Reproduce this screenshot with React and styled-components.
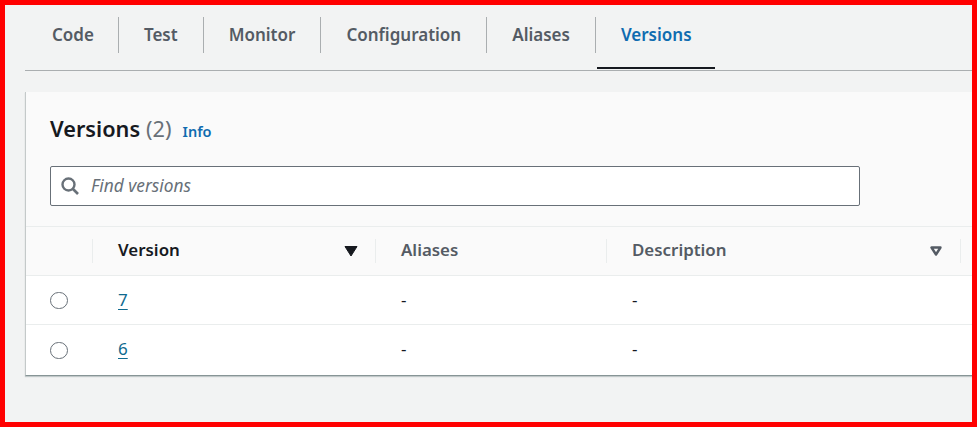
import React from "react";
import styled, { createGlobalStyle } from "styled-components";

const GlobalStyle = createGlobalStyle`
  html, body {
    margin: 0;
    padding: 0;
    background: #f2f3f3;
  }
  * {
    box-sizing: border-box;
  }
`;

const tabs = ["Code", "Test", "Monitor", "Configuration", "Aliases", "Versions"];
const versions = ["7", "6"];

function SortIcon({ active }) {
  return (
    <SortSvg viewBox="0 0 14 12">
      {active ? (
        <path d="M1 1.5h12L7 11z" fill="#16191f" stroke="#16191f" strokeLinejoin="round" />
      ) : (
        <path d="M2.5 2.5h9L7 9.5z" fill="none" stroke="#545b64" strokeWidth="2.4" strokeLinejoin="round" />
      )}
    </SortSvg>
  );
}

function SearchIcon() {
  return (
    <SearchSvg viewBox="0 0 18 18">
      <circle cx="7.5" cy="7.5" r="6" fill="none" stroke="#687078" strokeWidth="2.4" />
      <path d="M12 12l5 5" fill="none" stroke="#687078" strokeWidth="2.6" />
    </SearchSvg>
  );
}

export default function App() {
  return (
    <Page>
      <GlobalStyle />
      <TabBar>
        {tabs.map((tab, index) => (
          <Tab key={tab} $active={tab === "Versions"} $first={index === 0}>
            {tab}
          </Tab>
        ))}
      </TabBar>
      <Panel>
        <PanelHead>
          <TitleRow>
            <Title>Versions</Title>
            <Count>(2)</Count>
            <Info>Info</Info>
          </TitleRow>
          <SearchBox>
            <SearchIcon />
            <SearchInput placeholder="Find versions" readOnly />
          </SearchBox>
        </PanelHead>
        <HeadRow>
          <HeadCell />
          <HeadCell $sep $active>
            Version
            <SortIcon active />
          </HeadCell>
          <HeadCell $sep>Aliases</HeadCell>
          <HeadCell $sep>
            Description
            <SortIcon />
          </HeadCell>
          <HeadCell $sep />
        </HeadRow>
        {versions.map((version) => (
          <Row key={version}>
            <RadioCell>
              <Radio />
            </RadioCell>
            <Cell>
              <VersionLink href="#">{version}</VersionLink>
            </Cell>
            <Cell>-</Cell>
            <Cell>-</Cell>
            <Cell />
          </Row>
        ))}
      </Panel>
    </Page>
  );
}

const columns = "66px 283px 231px 354px 1fr";

const Page = styled.div`
  width: 977px;
  height: 427px;
  border: 5px solid #ff0000;
  background: #f2f3f3;
  padding: 0 0 0 20px;
  font-family: "Noto Sans", "Open Sans", sans-serif;
  overflow: hidden;
`;

const TabBar = styled.div`
  display: flex;
  align-items: center;
  height: 66px;
  padding-bottom: 5px;
  border-bottom: 1px solid #aaaeb0;
  margin-bottom: 21px;
`;

const Tab = styled.div`
  position: relative;
  height: 36px;
  display: flex;
  align-items: center;
  padding: 0 ${(p) => (p.$first ? "24px" : p.$active ? "23px" : "25px")} 2px ${(p) => (p.$first ? "27px" : "25px")};
  font-size: 17px;
  font-weight: 600;
  color: ${(p) => (p.$active ? "#0f6cb0" : "#545b64")};
  border-right: ${(p) => (p.$active ? "none" : "1px solid #aaaeb0")};
  ${(p) =>
    p.$active &&
    `
    &::after {
      content: "";
      position: absolute;
      left: 1px;
      right: 0;
      bottom: -16px;
      height: 2px;
      background: #16191f;
    }
  `}
`;

const Panel = styled.div`
  background: #fff;
  border-left: 1px solid #c4c9c9;
  border-bottom: 1px solid #879596;
  box-shadow: 0 1px 1px rgba(0, 28, 36, 0.2);
`;

const PanelHead = styled.div`
  background: #fafafa;
  padding: 22px 0 20px 24px;
  height: 135px;
  border-bottom: 1px solid #eaeded;
`;

const TitleRow = styled.div`
  display: flex;
  align-items: baseline;
  height: 32px;
  margin-bottom: 20px;
`;

const Title = styled.h2`
  margin: 0;
  font-size: 21.7px;
  font-weight: 600;
  color: #16191f;
`;

const Count = styled.span`
  margin-left: 6px;
  font-size: 21.7px;
  color: #687078;
`;

const Info = styled.a`
  margin-left: 11px;
  font-size: 14.5px;
  font-weight: 600;
  color: #0f6cb0;
`;

const SearchBox = styled.div`
  display: flex;
  align-items: center;
  width: 810px;
  height: 40px;
  background: #fff;
  border: 1px solid #687078;
  border-radius: 2px;
  padding-left: 10px;
`;

const SearchSvg = styled.svg`
  width: 18px;
  height: 18px;
`;

const SearchInput = styled.input`
  flex: 1;
  margin-left: 12px;
  border: none;
  outline: none;
  padding: 0 0 2px;
  background: transparent;
  font-family: inherit;
  font-size: 17.3px;
  font-style: italic;
  &::placeholder {
    color: #687078;
    opacity: 1;
  }
`;

const HeadRow = styled.div`
  display: grid;
  grid-template-columns: ${columns};
  align-items: center;
  height: 49px;
  background: #fafafa;
  border-bottom: 1px solid #eaeded;
`;

const HeadCell = styled.div`
  display: flex;
  align-items: center;
  justify-content: space-between;
  height: 24px;
  padding: 0 17px 3px 25px;
  font-size: 16.9px;
  font-weight: 600;
  color: ${(p) => (p.$active ? "#16191f" : "#545b64")};
  border-left: ${(p) => (p.$sep ? "1px solid #eaeded" : "none")};
`;

const SortSvg = styled.svg`
  width: 14px;
  height: 12px;
  margin-top: 2px;
`;

const Cell = styled.div`
  padding: 0 0 2px 26px;
`;

const Row = styled.div`
  display: grid;
  grid-template-columns: ${columns};
  align-items: center;
  height: 48px;
  color: #16191f;
  font-size: 17px;
  & + & {
    height: 51px;
    border-top: 1px solid #eaeded;
  }
  & + & ${Cell} {
    padding-bottom: 4px;
  }
`;

const RadioCell = styled.div`
  display: flex;
  padding: 1px 0 0 24px;
`;

const Radio = styled.span`
  width: 17.5px;
  height: 17.5px;
  border: 1.5px solid #687078;
  border-radius: 50%;
`;

const VersionLink = styled.a`
  color: #0f6a8f;
  text-decoration: underline;
  text-underline-offset: 3px;
`;
